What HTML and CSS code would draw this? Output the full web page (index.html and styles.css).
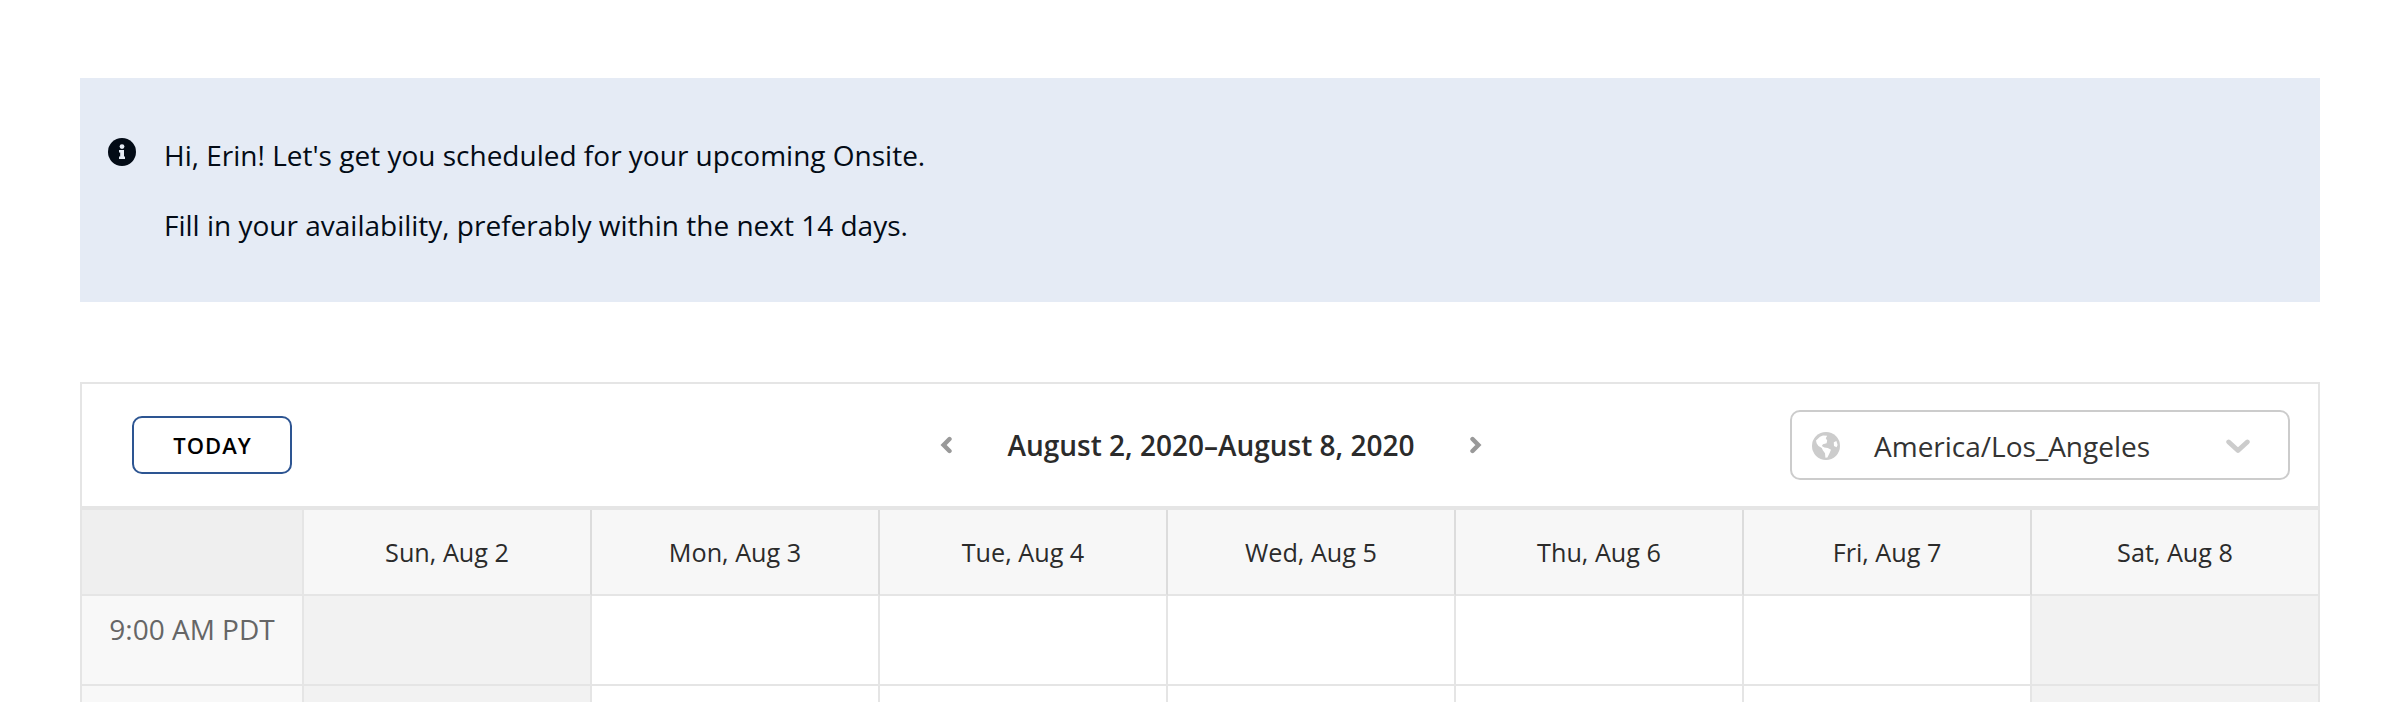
FILE: index.html
```html
<!DOCTYPE html>
<html lang="en">
<head>
    <meta charset="UTF-8">
    <meta name="viewport" content="width=device-width, initial-scale=1.0">
    <title>Schedule Availability</title>
    <link rel="stylesheet" href="styles.css">
</head>
<body>

    <!-- Intro message -->
    <div class="notice">
        <svg class="notice-icon" viewBox="0 0 28 28">
            <circle cx="14" cy="14" r="14" fill="#030b16"/>
            <circle cx="14" cy="8.6" r="2.4" fill="#e5ebf5"/>
            <path d="M11 12h5v6.5h1v2.5h-6v-2.5h1.2v-4H11z" fill="#e5ebf5"/>
        </svg>
        <div class="notice-text">
            <p>Hi, Erin! Let's get you scheduled for your upcoming Onsite.</p>
            <p>Fill in your availability, preferably within the next 14 days.</p>
        </div>
    </div>

    <div class="calendar">
        <!-- Toolbar -->
        <div class="toolbar">
            <button class="today-btn">TODAY</button>
            <div class="week-nav">
                <button class="nav-btn" aria-label="Previous week">
                    <svg width="12" height="18" viewBox="0 0 12 18"><path d="M9.5 3L3.6 9l5.9 6"/></svg>
                </button>
                <h2>August 2, 2020–August 8, 2020</h2>
                <button class="nav-btn" aria-label="Next week">
                    <svg width="12" height="18" viewBox="0 0 12 18"><path d="M2.5 3L8.4 9l-5.9 6"/></svg>
                </button>
            </div>
            <div class="timezone">
                <svg class="globe" viewBox="0 0 28 28">
                    <circle cx="14" cy="14" r="14" fill="#ccc"/>
                    <path d="M4 8.5L8 4.7l3-1.2 4.2.2-1.4 2.5 1.4 2.2-.6 2.8-3.6 1-1.2 1.8 2.6 1.6 3.4.4 3.2 1.8-1.6 3.8-2 4-2 .1-.4-4.5-2.2-3-1-2.1-3.3-2.1-1.8-2.6z" fill="#fff"/>
                    <path d="M21.8 10.3l2.6-1.4 1.2 4-1 2.4-2.6-1.3z" fill="#fff"/>
                </svg>
                <span>America/Los_Angeles</span>
                <svg class="caret" viewBox="0 0 24 16"><path d="M2.7 4l9.3 8.6L21.3 4"/></svg>
            </div>
        </div>

        <!-- Week grid -->
        <div class="week">
            <div class="corner"></div>
            <div class="day">Sun, Aug 2</div>
            <div class="day">Mon, Aug 3</div>
            <div class="day">Tue, Aug 4</div>
            <div class="day">Wed, Aug 5</div>
            <div class="day">Thu, Aug 6</div>
            <div class="day">Fri, Aug 7</div>
            <div class="day">Sat, Aug 8</div>

            <div class="time">9:00 AM PDT</div>
            <div class="slot closed"></div>
            <div class="slot"></div>
            <div class="slot"></div>
            <div class="slot"></div>
            <div class="slot"></div>
            <div class="slot"></div>
            <div class="slot closed"></div>

            <div class="time"></div>
            <div class="slot closed"></div>
            <div class="slot"></div>
            <div class="slot"></div>
            <div class="slot"></div>
            <div class="slot"></div>
            <div class="slot"></div>
            <div class="slot closed"></div>
        </div>
    </div>

</body>
</html>
```
FILE: styles.css
```css
* {
    margin: 0;
    padding: 0;
    box-sizing: border-box;
}

body {
    font-family: 'Open Sans', sans-serif;
    font-size: 28px;
    background-color: #fff;
    color: #2b2b2b;
    padding: 78px 78px 0 80px;
}

.notice {
    display: flex;
    align-items: flex-start;
    gap: 28px;
    height: 224px;
    padding: 60px 28px 0;
    margin-bottom: 80px;
    background-color: #e5ebf5;
    color: #030b16;
}

.notice-icon {
    width: 28px;
    height: 28px;
}

.notice-text p {
    line-height: 34px;
    margin-bottom: 36px;
}

.calendar {
    border: 2px solid #e5e5e5;
    border-bottom: none;
}

.toolbar {
    display: grid;
    grid-template-columns: 500px 1fr 500px;
    align-items: center;
    height: 126px;
    padding: 0 28px 0 50px;
    border-bottom: 4px solid #e5e5e5;
}

button {
    font-family: inherit;
    background: none;
    border: none;
    cursor: pointer;
}

.today-btn {
    width: 160px;
    height: 58px;
    border: 2px solid #2d5592;
    border-radius: 10px;
    color: #000;
    font-size: 22px;
    font-weight: 600;
    letter-spacing: 1px;
    text-indent: 1px;
}

.week-nav {
    display: flex;
    justify-content: center;
    align-items: center;
    gap: 55px;
}

.week-nav h2 {
    font-size: 28px;
    font-weight: 600;
}

.nav-btn {
    display: flex;
}

.nav-btn path {
    fill: none;
    stroke: #999;
    stroke-width: 4.4;
    stroke-linecap: round;
}

.timezone {
    display: flex;
    align-items: center;
    height: 70px;
    padding: 0 38px 0 20px;
    border: 2px solid #ccc;
    border-radius: 10px;
    color: #333;
}

.timezone span {
    flex: 1;
    margin-left: 34px;
    padding-top: 2px;
}

.globe {
    width: 28px;
    height: 28px;
    margin-top: 2px;
}

.caret {
    width: 24px;
    height: 16px;
    margin-top: 2px;
}

.caret path {
    fill: none;
    stroke: #ccc;
    stroke-width: 4.8;
    stroke-linecap: round;
    stroke-linejoin: round;
}

.week {
    display: grid;
    grid-template-columns: 222px repeat(6, 288px) 286px;
    grid-template-rows: 86px 90px 16px;
}

.week > div {
    border-right: 2px solid #e5e5e5;
    border-bottom: 2px solid #e5e5e5;
}

.week > div:nth-child(8n) {
    border-right: none;
}

.week > div:nth-child(n+17) {
    border-bottom: none;
    padding: 0;
}

.corner {
    background-color: #efefef;
}

.week .day {
    display: flex;
    justify-content: center;
    align-items: center;
    background-color: #f7f7f7;
    border-right-color: #dcdcdc;
    font-size: 25.2px;
}

.time {
    padding-top: 14px;
    background-color: #f8f8f8;
    color: #666;
    text-align: center;
}

.closed {
    background-color: #f2f2f2;
}
```
